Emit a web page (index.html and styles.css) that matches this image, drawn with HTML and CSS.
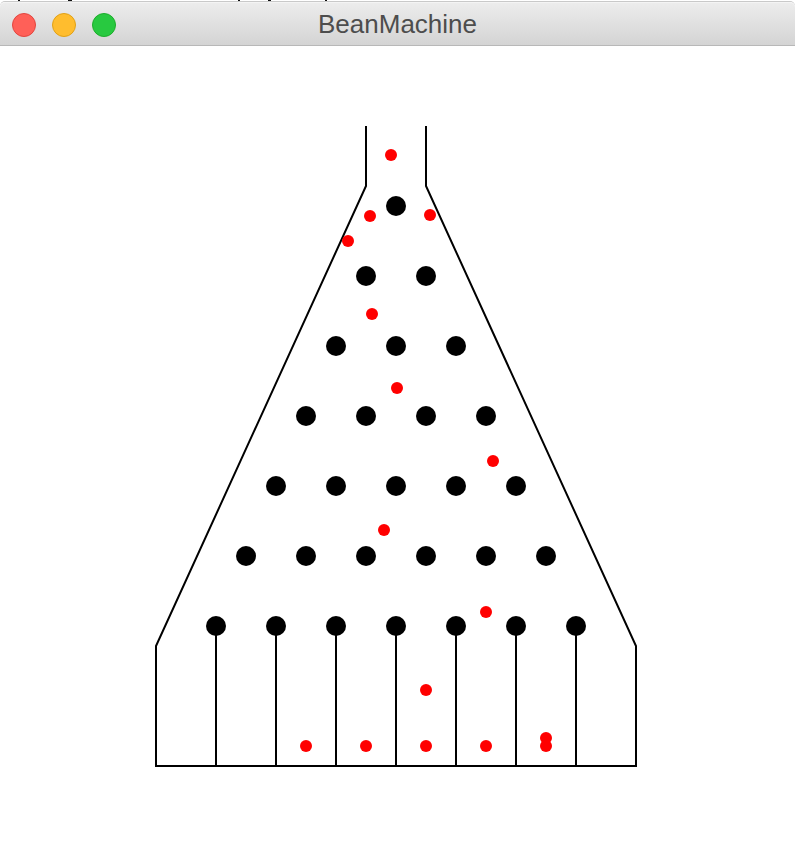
FILE: index.html
```html
<!DOCTYPE html>
<html>
<head>
<meta charset="utf-8">
<title>BeanMachine</title>
<link rel="stylesheet" href="styles.css">
</head>
<body>
<div class="window">
  <div class="behind">
    <span class="frag f1"></span>
    <span class="frag f2"></span>
    <span class="frag f3"></span>
    <span class="frag f4"></span>
    <span class="frag f5"></span>
  </div>
  <div class="titlebar">
    <div class="lights">
      <span class="light red"></span>
      <span class="light yellow"></span>
      <span class="light green"></span>
    </div>
    <div class="title">BeanMachine</div>
  </div>
  <div class="canvas">
    <svg class="board" width="795" height="798" viewBox="0 45 795 798" xmlns="http://www.w3.org/2000/svg">
      <g class="frame" fill="none" stroke="#000" stroke-width="2">
        <polyline points="366,125 366,185 156,645 156,765 636,765 636,645 426,185 426,125"/>
        <line x1="216" y1="625" x2="216" y2="765"/>
        <line x1="276" y1="625" x2="276" y2="765"/>
        <line x1="336" y1="625" x2="336" y2="765"/>
        <line x1="396" y1="625" x2="396" y2="765"/>
        <line x1="456" y1="625" x2="456" y2="765"/>
        <line x1="516" y1="625" x2="516" y2="765"/>
        <line x1="576" y1="625" x2="576" y2="765"/>
      </g>
      <g class="pegs" fill="#000">
        <circle cx="396" cy="205" r="10"/>
        <circle cx="366" cy="275" r="10"/><circle cx="426" cy="275" r="10"/>
        <circle cx="336" cy="345" r="10"/><circle cx="396" cy="345" r="10"/><circle cx="456" cy="345" r="10"/>
        <circle cx="306" cy="415" r="10"/><circle cx="366" cy="415" r="10"/><circle cx="426" cy="415" r="10"/><circle cx="486" cy="415" r="10"/>
        <circle cx="276" cy="485" r="10"/><circle cx="336" cy="485" r="10"/><circle cx="396" cy="485" r="10"/><circle cx="456" cy="485" r="10"/><circle cx="516" cy="485" r="10"/>
        <circle cx="246" cy="555" r="10"/><circle cx="306" cy="555" r="10"/><circle cx="366" cy="555" r="10"/><circle cx="426" cy="555" r="10"/><circle cx="486" cy="555" r="10"/><circle cx="546" cy="555" r="10"/>
        <circle cx="216" cy="625" r="10"/><circle cx="276" cy="625" r="10"/><circle cx="336" cy="625" r="10"/><circle cx="396" cy="625" r="10"/><circle cx="456" cy="625" r="10"/><circle cx="516" cy="625" r="10"/><circle cx="576" cy="625" r="10"/>
      </g>
      <g class="balls" fill="#ff0000">
        <circle cx="391" cy="154" r="6"/>
        <circle cx="370" cy="215" r="6"/>
        <circle cx="430" cy="214" r="6"/>
        <circle cx="348" cy="240" r="6"/>
        <circle cx="372" cy="313" r="6"/>
        <circle cx="397" cy="387" r="6"/>
        <circle cx="493" cy="460" r="6"/>
        <circle cx="384" cy="529" r="6"/>
        <circle cx="486" cy="611" r="6"/>
        <circle cx="426" cy="689" r="6"/>
        <circle cx="306" cy="745" r="6"/>
        <circle cx="366" cy="745" r="6"/>
        <circle cx="426" cy="745" r="6"/>
        <circle cx="486" cy="745" r="6"/>
        <circle cx="546" cy="737" r="6"/>
        <circle cx="546" cy="745" r="6"/>
      </g>
    </svg>
  </div>
</div>
</body>
</html>
```
FILE: styles.css
```css
html, body {
  margin: 0;
  padding: 0;
  background: #ffffff;
}
.window {
  width: 795px;
  height: 844px;
  overflow: hidden;
  background: #ffffff;
}
.behind {
  height: 2px;
  display: flex;
  align-items: flex-start;
  background: #ffffff;
}
.frag {
  display: block;
  height: 2px;
  background: #111;
}
.f1 { width: 2px; margin-left: 18px; }
.f2 { width: 4px; margin-left: 48px; }
.f3 { width: 2px; margin-left: 166px; }
.f4 { width: 3px; margin-left: 28px; }
.f5 { width: 2px; margin-left: 54px; }
.titlebar {
  position: relative;
  height: 44px;
  box-sizing: border-box;
  background: linear-gradient(#ececec, #d4d4d4);
  border-bottom: 1px solid #b8b8b8;
  border-top: 1px solid #f4f4f4;
  border-radius: 5px 5px 0 0;
  box-shadow: inset 0 0 0 0 transparent, 0 -1px 0 #c9c9c9;
  display: flex;
  align-items: center;
  justify-content: center;
}
.lights {
  position: absolute;
  left: 12px;
  top: 10px;
  display: flex;
  gap: 16px;
}
.light {
  display: block;
  width: 24px;
  height: 24px;
  box-sizing: border-box;
  border-radius: 50%;
}
.red { background: #ff6058; border: 1px solid #e2463f; }
.yellow { background: #ffbd2e; border: 1px solid #e1a116; }
.green { background: #28c940; border: 1px solid #1dad2b; }
.title {
  font-family: "Liberation Sans", Arial, sans-serif;
  font-size: 26px;
  color: #4d4d4d;
  margin-top: 0px;
}
.canvas {
  height: 798px;
}
.board {
  display: block;
}
```
